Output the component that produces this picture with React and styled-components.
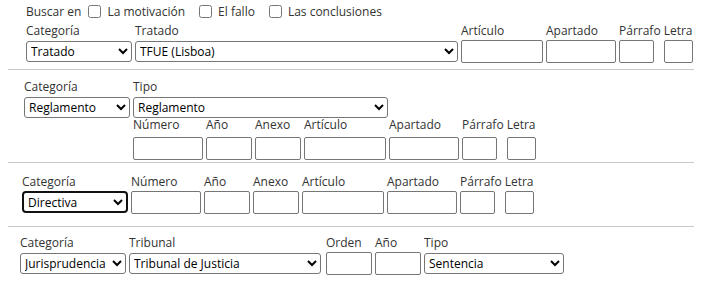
import React from 'react'
import styled, { createGlobalStyle } from 'styled-components'

const GlobalStyle = createGlobalStyle`
  body {
    margin: 0;
    background: #fff;
    font-family: "Open Sans", "Liberation Sans", sans-serif;
    font-size: 12px;
    color: #333;
  }
`

const CATEGORIES = ['Tratado', 'Reglamento', 'Directiva', 'Jurisprudencia']

const Page = styled.div`
  padding-left: 8px;
  width: 686px;
`

const Section = styled.div`
  padding: ${p => p.$pt}px 0 ${p => p.$pb}px ${p => p.$indent}px;
  border-bottom: ${p => (p.$last ? 'none' : '1px solid #c9c9c9')};
`

const SearchRow = styled.div`
  display: flex;
  align-items: center;
  height: 18px;
  margin: 2px 0 2px;
  white-space: nowrap;
`

const CheckLabel = styled.label`
  display: inline-flex;
  align-items: center;
  gap: 6px;
  margin-left: 14px;

  &:first-of-type {
    margin-left: 7px;
  }
`

const Checkbox = styled.input.attrs({ type: 'checkbox' })`
  width: 13px;
  height: 13px;
  margin: 0;
`

const FieldRow = styled.div`
  display: flex;
  align-items: flex-start;
  gap: 3px;
  margin-top: ${p => p.$mt || 0}px;
`

const Grid = styled.div`
  display: grid;
  grid-template-columns: 106px auto;
  column-gap: 3px;
  justify-content: start;
`

const Field = styled.div`
  display: flex;
  flex-direction: column;
  align-items: flex-start;
  width: ${p => (p.$w ? `${p.$w}px` : 'auto')};
`

const Label = styled.span`
  display: block;
  line-height: 17px;
  margin-bottom: ${p => p.$mb ?? 1}px;
  white-space: nowrap;
`

const Select = styled.select`
  box-sizing: border-box;
  width: ${p => p.$w}px;
  height: ${p => (p.$focused ? 22 : 21)}px;
  margin: ${p => (p.$focused ? '0 0 1px' : '1px 0')};
  padding: 0;
  font-family: inherit;
  font-size: 12px;
  color: #000;
  background: #fff;
  border: ${p => (p.$focused ? '2px solid #111' : '1px solid #767676')};
  border-radius: ${p => (p.$focused ? 4 : 3)}px;
  outline: none;
`

const TextInput = styled.input`
  box-sizing: border-box;
  width: ${p => p.$w}px;
  height: 23px;
  margin: 0;
  padding: 1px 2px;
  font-family: inherit;
  font-size: 12px;
  background: #fff;
  border: 1px solid #767676;
  border-radius: 2px;
`

const CategoryField = ({ value, focused }) => (
  <Field $w={106}>
    <Label>Categoría</Label>
    <Select $w={106} $focused={focused} defaultValue={value}>
      {CATEGORIES.map(c => (
        <option key={c}>{c}</option>
      ))}
    </Select>
  </Field>
)

const InputField = ({ label, w, mb }) => (
  <Field>
    <Label $mb={mb}>{label}</Label>
    <TextInput $w={w} />
  </Field>
)

const ActFields = ({ mb }) => (
  <>
    <InputField label="Número" w={70} mb={mb} />
    <InputField label="Año" w={46} mb={mb} />
    <InputField label="Anexo" w={46} mb={mb} />
    <InputField label="Artículo" w={82} mb={mb} />
    <InputField label="Apartado" w={70} mb={mb} />
    <InputField label="Párrafo" w={35} mb={mb} />
    <InputField label="Letra" w={29} mb={mb} />
  </>
)

export default function App() {
  return (
    <Page>
      <GlobalStyle />

      <Section $pt={0} $pb={6} $indent={18}>
        <SearchRow>
          <span>Buscar en</span>
          <CheckLabel>
            <Checkbox />
            La motivación
          </CheckLabel>
          <CheckLabel>
            <Checkbox />
            El fallo
          </CheckLabel>
          <CheckLabel>
            <Checkbox />
            Las conclusiones
          </CheckLabel>
        </SearchRow>
        <FieldRow>
          <CategoryField value="Tratado" />
          <Field>
            <Label>Tratado</Label>
            <Select $w={323} defaultValue="TFUE (Lisboa)">
              <option>TFUE (Lisboa)</option>
              <option>TUE (Lisboa)</option>
            </Select>
          </Field>
          <InputField label="Artículo" w={82} />
          <InputField label="Apartado" w={70} />
          <InputField label="Párrafo" w={35} />
          <InputField label="Letra" w={29} />
        </FieldRow>
      </Section>

      <Section $pt={8} $pb={2} $indent={16}>
        <Grid>
          <CategoryField value="Reglamento" />
          <Field>
            <Label>Tipo</Label>
            <Select $w={255} defaultValue="Reglamento">
              <option>Reglamento</option>
              <option>Reglamento de ejecución</option>
            </Select>
          </Field>
          <span />
          <FieldRow $mt={-3}>
            <ActFields mb={4} />
          </FieldRow>
        </Grid>
      </Section>

      <Section $pt={10} $pb={12} $indent={14}>
        <FieldRow>
          <CategoryField value="Directiva" focused />
          <ActFields />
        </FieldRow>
      </Section>

      <Section $pt={7} $pb={0} $indent={12} $last>
        <FieldRow>
          <CategoryField value="Jurisprudencia" />
          <Field $w={194}>
            <Label>Tribunal</Label>
            <Select $w={192} defaultValue="Tribunal de Justicia">
              <option>Tribunal de Justicia</option>
              <option>Tribunal General</option>
            </Select>
          </Field>
          <InputField label="Orden" w={46} />
          <InputField label="Año" w={46} />
          <Field>
            <Label>Tipo</Label>
            <Select $w={140} defaultValue="Sentencia">
              <option>Sentencia</option>
              <option>Auto</option>
            </Select>
          </Field>
        </FieldRow>
      </Section>
    </Page>
  )
}
